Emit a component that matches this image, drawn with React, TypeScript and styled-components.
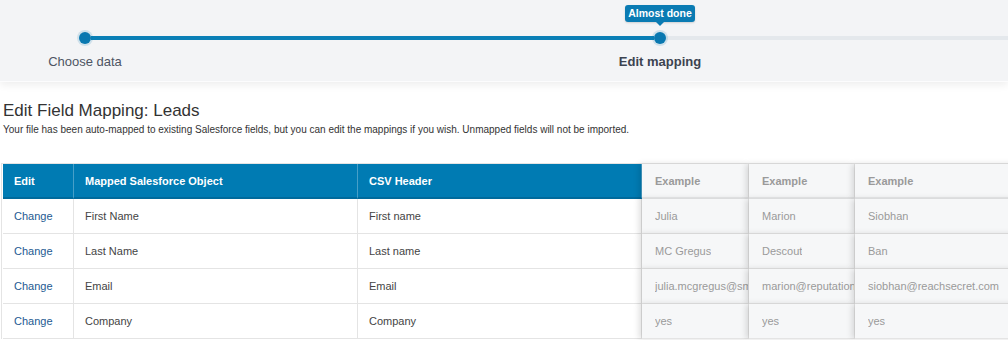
import React from "react";
import styled, { createGlobalStyle } from "styled-components";

const Global = createGlobalStyle`
  html, body { margin: 0; padding: 0; background: #fff; }
  body { font-family: "Liberation Sans", Arial, sans-serif; overflow: hidden; width: 1008px; }
`;

const Page = styled.div`
  width: 1008px;
  height: 340px;
  overflow: hidden;
`;

const Header = styled.div`
  position: relative;
  height: 82px;
  background: #f3f4f6;
  border-bottom: 1px solid #fcfcfd;
  box-shadow: 0 3px 8px rgba(0, 0, 0, 0.07);
  padding-top: 32px;
  box-sizing: border-box;
  overflow: hidden;
`;

const TrackRow = styled.div`
  display: flex;
  align-items: center;
  margin-left: 79px;
  height: 12px;
`;

const Dot = styled.div`
  flex: 0 0 12px;
  height: 12px;
  border-radius: 50%;
  background: #0a78b0;
  box-shadow: 0 0 0 2px rgba(10, 120, 176, 0.15);
  position: relative;
  z-index: 1;
`;

const Fill = styled.div<{ $done?: boolean; $w?: number }>`
  flex: ${(p) => (p.$w ? `0 0 ${p.$w}px` : "1 1 auto")};
  height: 4px;
  background: ${(p) => (p.$done ? "#0a7fb6" : "#e4e8ec")};
`;

const Labels = styled.div`
  display: flex;
  gap: 405px;
  margin-top: 10px;
`;

const Label = styled.div<{ $active?: boolean }>`
  flex: 0 0 170px;
  text-align: center;
  font-size: 13px;
  line-height: 16px;
  color: ${(p) => (p.$active ? "#3c4350" : "#4e5563")};
  font-weight: ${(p) => (p.$active ? 700 : 400)};
`;

const Tip = styled.div`
  position: absolute;
  left: 625px;
  top: 5px;
  width: 70px;
  height: 17px;
  background: #0a7bb3;
  border-radius: 3px;
  color: #fff;
  font-size: 10.5px;
  font-weight: 700;
  line-height: 17px;
  text-align: center;
  box-shadow: 0 1px 2px rgba(0, 0, 0, 0.15);
  &::after {
    content: "";
    position: absolute;
    left: 31px;
    top: 17px;
    border-left: 4px solid transparent;
    border-right: 4px solid transparent;
    border-top: 4px solid #0a7bb3;
  }
`;

const Content = styled.div`
  padding: 19px 0 0 3px;
`;

const Title = styled.h1`
  margin: 0;
  font-size: 17px;
  font-weight: 400;
  color: #333;
  line-height: 20px;
`;

const Sub = styled.p`
  margin: 2px 0 0;
  font-size: 10px;
  color: #333;
  line-height: 14px;
`;

const Table = styled.div`
  margin: 26px 0 0 -2px;
  padding-left: 1px;
  display: grid;
  grid-template-columns: 71px 284px 284px 107px 106px 200px;
  border-top: 1px solid #e4e4e4;
  border-left: 1px solid #e4e4e4;
  width: max-content;
`;

const Cell = styled.div<{ $head?: boolean; $ex?: boolean; $kind?: "link" }>`
  height: ${(p) => (p.$head ? "33px" : "34px")};
  box-sizing: content-box;
  padding-left: ${(p) => (p.$ex ? "13px" : "11px")};
  display: flex;
  align-items: center;
  font-size: 11px;
  white-space: nowrap;
  overflow: hidden;
  position: relative;
  background: ${(p) => (p.$head && !p.$ex ? "#007bb3" : p.$ex ? "#f6f7f8" : "#fff")};
  color: ${(p) =>
    p.$head && !p.$ex ? "#fff" : p.$ex ? "#9a9a9a" : p.$kind === "link" ? "#245a92" : "#444"};
  font-weight: ${(p) => (p.$head ? 700 : 400)};
  border-bottom: ${(p) => (p.$head && !p.$ex ? "2px solid #006a9c" : p.$head ? "2px solid #e8e9ea" : "1px solid #e4e4e4")};
  border-right: 1px solid
    ${(p) => (p.$head && !p.$ex ? "rgba(255,255,255,0.28)" : "#e4e4e4")};
  box-shadow: ${(p) => (p.$ex ? "-3px 0 6px rgba(0,0,0,0.13)" : "none")};
  z-index: ${(p) => (p.$ex ? 1 : 0)};
`;

const CellText = styled.span`
  display: block;
  overflow: hidden;
  max-width: 100%;
`;

const heads = ["Edit", "Mapped Salesforce Object", "CSV Header"];
const rows = [
  ["First Name", "First name", "Julia", "Marion", "Siobhan"],
  ["Last Name", "Last name", "MC Gregus", "Descout", "Ban"],
  ["Email", "Email", "julia.mcgregus@smartsales.com", "marion@reputationsquad.com", "siobhan@reachsecret.com"],
  ["Company", "Company", "yes", "yes", "yes"],
];

export default function App() {
  return (
    <Page>
      <Global />
      <Header>
        <Tip>Almost done</Tip>
        <TrackRow>
          <Dot />
          <Fill $done $w={563} />
          <Dot />
          <Fill />
        </TrackRow>
        <Labels>
          <Label>Choose data</Label>
          <Label $active>Edit mapping</Label>
        </Labels>
      </Header>
      <Content>
        <Title>Edit Field Mapping: Leads</Title>
        <Sub>
          Your file has been auto-mapped to existing Salesforce fields, but you can edit the mappings if you wish.
          Unmapped fields will not be imported.
        </Sub>
        <Table>
          {heads.map((h) => (
            <Cell key={h} $head>
              {h}
            </Cell>
          ))}
          {[0, 1, 2].map((i) => (
            <Cell key={"ex" + i} $head $ex>
              Example
            </Cell>
          ))}
          {rows.map((r, ri) => (
            <React.Fragment key={ri}>
              <Cell $kind="link">Change</Cell>
              <Cell>{r[0]}</Cell>
              <Cell>{r[1]}</Cell>
              <Cell $ex>
                <CellText>{r[2]}</CellText>
              </Cell>
              <Cell $ex>
                <CellText>{r[3]}</CellText>
              </Cell>
              <Cell $ex>
                <CellText>{r[4]}</CellText>
              </Cell>
            </React.Fragment>
          ))}
        </Table>
      </Content>
    </Page>
  );
}
